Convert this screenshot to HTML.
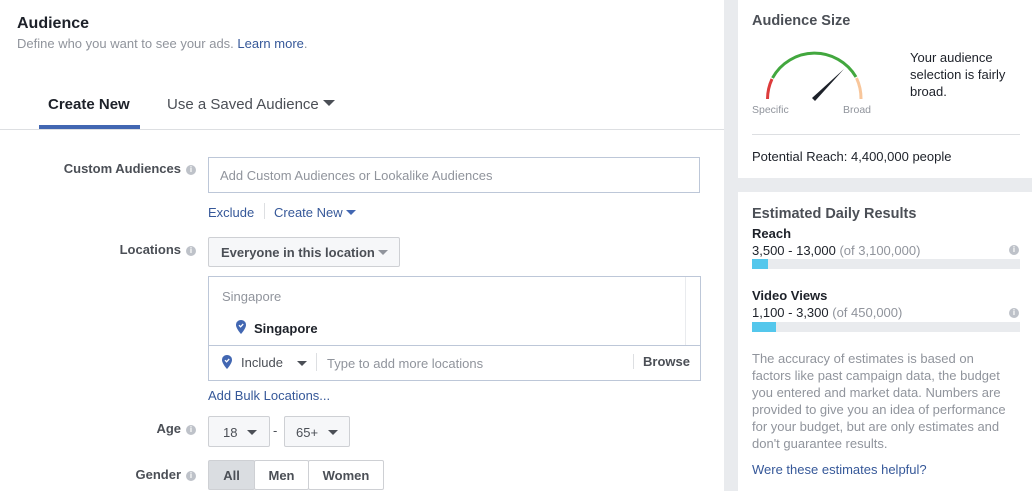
<!DOCTYPE html>
<html><head><meta charset="utf-8"><style>
*{box-sizing:border-box;margin:0;padding:0}
body{width:1032px;height:491px;overflow:hidden;background:#fff;font-family:"Liberation Sans",Helvetica,Arial,sans-serif;font-size:13px;color:#1d2129;position:relative}
.a{position:absolute;white-space:nowrap}
.lbl{color:#4b4f56;font-weight:bold;text-align:right;width:196px;left:0}
.i{display:inline-block;width:10px;height:10px;border-radius:50%;background:#bec2c9;color:#fff;font-size:8px;line-height:10px;text-align:center;vertical-align:1px;margin-left:5px;font-weight:bold;font-style:normal}
.link{color:#365899}
.btn{position:absolute;background:#f6f7f9;border:1px solid #ced0d4;border-radius:2px;color:#4b4f56;font-weight:bold;white-space:nowrap}
.tri{display:inline-block;width:0;height:0;border-left:5px solid transparent;border-right:5px solid transparent;border-top:5px solid #4b4f56;vertical-align:2px}
.gray{color:#90949c}
</style></head><body>
<div class="a" style="left:17px;top:15px;font-size:16px;font-weight:bold">Audience</div>
<div class="a" style="left:17px;top:36px;color:#90949c">Define who you want to see your ads. <span class="link">Learn more</span>.</div>
<div class="a" style="left:48px;top:96px;font-size:15px;font-weight:bold">Create New</div>
<div class="a" style="left:39px;top:125px;width:101px;height:4px;background:#4267b2"></div>
<div class="a" style="left:167px;top:96px;font-size:15px;color:#4b4f56">Use a Saved Audience <span class="tri" style="border-top-color:#4b4f56;border-width:6px 6px 0 6px;vertical-align:3px"></span></div>
<div class="a" style="left:0;top:129px;width:724px;height:1px;background:#dddfe2"></div>

<div class="a lbl" style="top:161px">Custom Audiences<i class="i">i</i></div>
<div class="a" style="left:208px;top:157px;width:492px;height:36px;border:1px solid #bdc7d8"></div>
<div class="a gray" style="left:220px;top:168px">Add Custom Audiences or Lookalike Audiences</div>
<div class="a link" style="left:208px;top:205px">Exclude</div>
<div class="a" style="left:264px;top:203px;width:1px;height:16px;background:#dddfe2"></div>
<div class="a link" style="left:274px;top:205px">Create New <span class="tri" style="border-top-color:#4267b2"></span></div>

<div class="a lbl" style="top:242px">Locations<i class="i">i</i></div>
<div class="btn" style="left:208px;top:237px;width:192px;height:30px;padding:7px 12px">Everyone in this location <span class="tri" style="border-top-color:#90949c"></span></div>
<div class="a" style="left:208px;top:276px;width:493px;height:105px;border:1px solid #bdc7d8"></div>
<div class="a" style="left:685px;top:277px;width:1px;height:68px;background:#e9ebee"></div>
<div class="a" style="left:209px;top:345px;width:491px;height:1px;background:#bdc7d8"></div>
<div class="a gray" style="left:222px;top:289px">Singapore</div>
<svg class="a" style="left:236px;top:320px" width="10" height="14" viewBox="0 0 10 14"><path d="M5 0C2 0 0 2.2 0 5c0 3.5 5 9 5 9s5-5.5 5-9C10 2.2 8 0 5 0z" fill="#4267b2"/><path d="M3 5.2l1.6 1.6L7.2 4" stroke="#fff" stroke-width="1.3" fill="none"/></svg>
<div class="a" style="left:254px;top:321px;font-weight:bold">Singapore</div>
<svg class="a" style="left:222px;top:355px" width="10" height="14" viewBox="0 0 10 14"><path d="M5 0C2 0 0 2.2 0 5c0 3.5 5 9 5 9s5-5.5 5-9C10 2.2 8 0 5 0z" fill="#4267b2"/><path d="M3 5.2l1.6 1.6L7.2 4" stroke="#fff" stroke-width="1.3" fill="none"/></svg>
<div class="a" style="left:241px;top:355px;color:#4b4f56">Include</div>
<span class="a tri" style="left:297px;top:361px;border-top-color:#4b4f56"></span>
<div class="a" style="left:316px;top:353px;width:1px;height:18px;background:#dddfe2"></div>
<div class="a gray" style="left:327px;top:356px">Type to add more locations</div>
<div class="a" style="left:633px;top:354px;width:1px;height:15px;background:#dddfe2"></div>
<div class="a" style="left:643px;top:354px;font-weight:bold;color:#4b4f56">Browse</div>
<div class="a link" style="left:208px;top:388px">Add Bulk Locations...</div>

<div class="a lbl" style="top:421px">Age<i class="i">i</i></div>
<div class="btn" style="left:208px;top:416px;width:62px;height:31px;padding:8px 14px;font-weight:normal">18 <span class="tri" style="margin-left:6px"></span></div>
<div class="a" style="left:273px;top:423px;color:#4b4f56">-</div>
<div class="btn" style="left:284px;top:416px;width:66px;height:31px;padding:8px 11px;font-weight:normal">65+ <span class="tri" style="margin-left:6px"></span></div>

<div class="a lbl" style="top:467px">Gender<i class="i">i</i></div>
<div class="btn" style="left:208px;top:460px;width:47px;height:30px;padding:7px 0;text-align:center;background:#dadde1">All</div>
<div class="btn" style="left:254px;top:460px;width:55px;height:30px;padding:7px 0;text-align:center;background:#fff">Men</div>
<div class="btn" style="left:308px;top:460px;width:76px;height:30px;padding:7px 0;text-align:center;background:#fff">Women</div>

<!-- right column -->
<div class="a" style="left:724px;top:0;width:308px;height:491px;background:#e9ebee"></div>
<div class="a" style="left:738px;top:0;width:294px;height:178px;background:#fff"></div>
<div class="a" style="left:738px;top:192px;width:294px;height:299px;background:#fff"></div>
<div class="a" style="left:752px;top:13px;font-size:14.5px;font-weight:bold;color:#4b4f56">Audience Size</div>
<svg class="a" style="left:752px;top:40px" width="130" height="65" viewBox="0 0 130 65">
<path d="M15.5 59 A48 48 0 0 1 20 39" stroke="#dd3c3c" stroke-width="3" fill="none"/>
<path d="M20.5 38 A48 48 0 0 1 104 37" stroke="#42a73e" stroke-width="3" fill="none"/>
<path d="M104.5 38 A48 48 0 0 1 109 59" stroke="#f8c69b" stroke-width="3" fill="none"/>
<path d="M60 58 L63 61 L92 29 Z" fill="#1d2129"/>
</svg>
<div class="a gray" style="left:752px;top:104px;font-size:10.5px">Specific</div>
<div class="a gray" style="left:843px;top:104px;font-size:10.5px">Broad</div>
<div class="a" style="left:910px;top:49px;line-height:17px">Your audience<br>selection is fairly<br>broad.</div>
<div class="a" style="left:752px;top:134px;width:268px;height:1px;background:#dddfe2"></div>
<div class="a" style="left:752px;top:149px">Potential Reach: 4,400,000 people</div>

<div class="a" style="left:752px;top:206px;font-size:14.5px;font-weight:bold;color:#4b4f56">Estimated Daily Results</div>
<div class="a" style="left:752px;top:226px;font-weight:bold">Reach</div>
<div class="a" style="left:752px;top:243px">3,500 - 13,000 <span class="gray">(of 3,100,000)</span></div>
<i class="a i" style="left:1004px;top:245px">i</i>
<div class="a" style="left:752px;top:259px;width:268px;height:10px;background:#e9ebee"></div>
<div class="a" style="left:752px;top:259px;width:16px;height:10px;background:#54c7ec"></div>
<div class="a" style="left:752px;top:288px;font-weight:bold">Video Views</div>
<div class="a" style="left:752px;top:305px">1,100 - 3,300 <span class="gray">(of 450,000)</span></div>
<i class="a i" style="left:1004px;top:308px">i</i>
<div class="a" style="left:752px;top:322px;width:268px;height:10px;background:#e9ebee"></div>
<div class="a" style="left:752px;top:322px;width:24px;height:10px;background:#54c7ec"></div>
<div class="a gray" style="left:752px;top:350px;line-height:17px">The accuracy of estimates is based on<br>factors like past campaign data, the budget<br>you entered and market data. Numbers are<br>provided to give you an idea of performance<br>for your budget, but are only estimates and<br>don't guarantee results.</div>
<div class="a link" style="left:752px;top:462px">Were these estimates helpful?</div>
</body></html>
